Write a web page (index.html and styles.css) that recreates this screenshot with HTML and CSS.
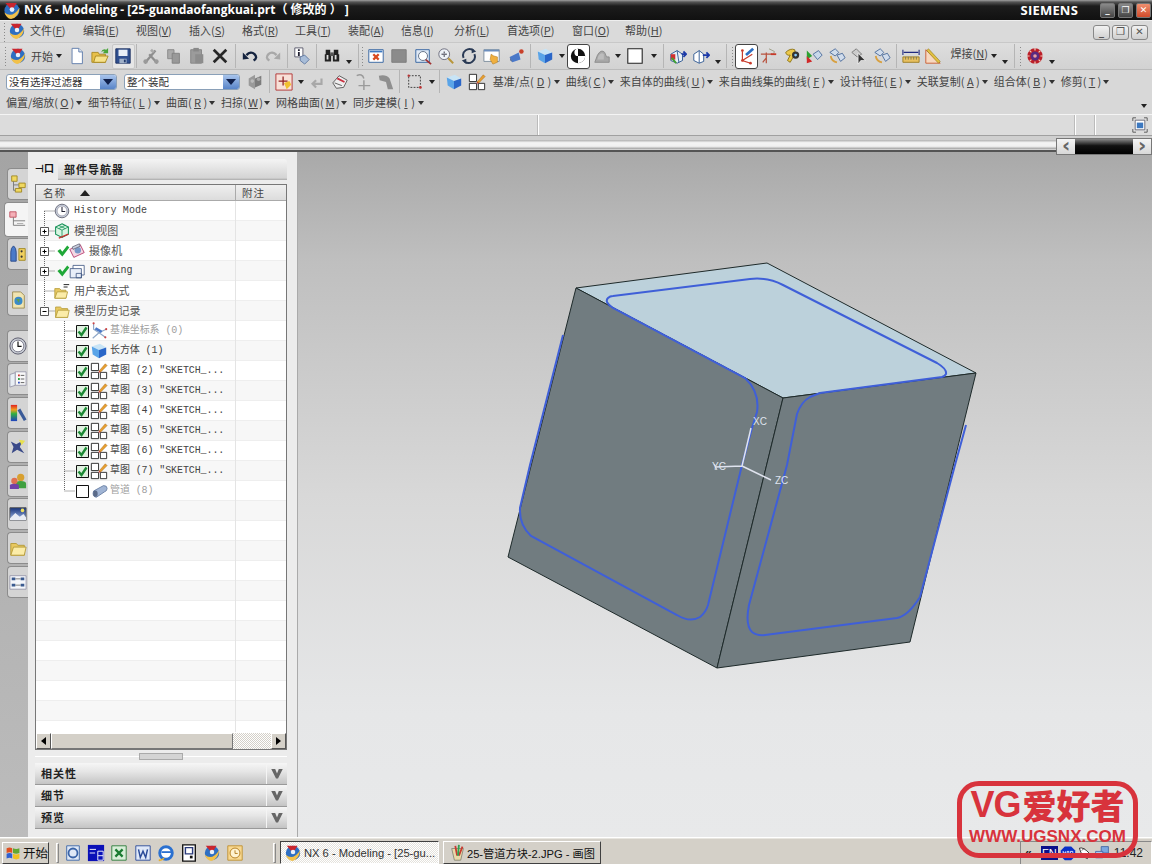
FILE: index.html
```html
<!DOCTYPE html>
<html lang="zh">
<head>
<meta charset="utf-8">
<title>NX 6 - Modeling</title>
<link rel="stylesheet" href="styles.css">
</head>
<body>
<svg class="defs" aria-hidden="true">
  <symbol id="nx" viewBox="0 0 20 20"><circle cx="10" cy="10" r="8" fill="#2e6fc2"/><path d="M3 2 10 10 15 2z" fill="#c9252e"/><path d="M2 12Q10 19 18 7 17 17 9 19 4 18 2 12z" fill="#f2c14a"/><circle cx="10" cy="9" r="2.5" fill="#e8f0fa"/></symbol>
  <symbol id="new" viewBox="0 0 20 20"><path d="M4.500 1.500H12L16 5.500V18.500H4.500z" fill="#fff" stroke="#5a78a8"/><path d="M12 1.500V5.500H16" fill="#dde6f2" stroke="#5a78a8"/></symbol>
  <symbol id="open" viewBox="0 0 20 20"><path d="M1 6H8L9 8H16V17H1z" fill="#e8c04a" stroke="#a88820"/><path d="M3 17 5 10H19L16 17z" fill="#f7e28a" stroke="#a88820"/><path d="M11 6Q13 1 17 3L19 1V7H13L15 5Q13 4 11 6z" fill="#4aa53a"/></symbol>
  <symbol id="save" viewBox="0 0 20 20"><path d="M2 2H18V18H2z" fill="#2f4f8f" stroke="#1c2f60"/><path d="M5 3H15V10H5z" fill="#e8eef6"/><path d="M6 13H14V18H6z" fill="#9fb0c8"/><path d="M11 14H13V17H11z" fill="#20386a"/></symbol>
  <symbol id="cut" viewBox="0 0 20 20"><path d="M3 18 15 4M17 18 8 8" stroke="#8e8e8e" stroke-width="2.500" fill="none"/><circle cx="4" cy="16" r="2.500" fill="#9a9a9a"/><circle cx="16" cy="16" r="2.500" fill="#9a9a9a"/><path d="M10 3 13 6" stroke="#aaa" stroke-width="3"/></symbol>
  <symbol id="copy" viewBox="0 0 20 20"><path d="M3 3H10V13H3z" fill="#aaa" stroke="#888"/><path d="M8 7H16V18H8z" fill="#999" stroke="#808080"/></symbol>
  <symbol id="paste" viewBox="0 0 20 20"><path d="M3 3H15V18H3z" fill="#9b9b9b" stroke="#858585"/><path d="M6 1H12V5H6z" fill="#888"/><path d="M8 8H17V18H8z" fill="#8c8c8c"/></symbol>
  <symbol id="del" viewBox="0 0 20 20"><path d="M3 3 17 17M17 3 3 17" stroke="#262626" stroke-width="3" fill="none"/></symbol>
  <symbol id="undo" viewBox="0 0 20 20"><path d="M6 9Q11 4 15 8T14 15" stroke="#14233f" stroke-width="2.600" fill="none"/><path d="M2 6 9 13 2 14z" fill="#14233f"/></symbol>
  <symbol id="redo" viewBox="0 0 20 20"><path d="M14 9Q9 4 5 8T6 15" stroke="#a8a8a8" stroke-width="2.600" fill="none"/><path d="M18 6 11 13 18 14z" fill="#a8a8a8"/></symbol>
  <symbol id="info" viewBox="0 0 20 20"><path d="M2 1H11V11H2z" fill="#fff" stroke="#556"/><path d="M5.500 2.500H7.500V4.500H5.500zM5.500 5.500H7.500V10H5.500z" fill="#223"/><path d="M8 11 13 9 18 14 13 19 8 15z" fill="#a8bdd8" stroke="#6078a0"/></symbol>
  <symbol id="bino" viewBox="0 0 20 20"><path d="M3 3H8V8H9V16H2V8H3zM12 3H17V8H18V16H11V8H12z" fill="#222"/><path d="M8 6H12V10H8z" fill="#555"/><path d="M4 9H6V14H4zM13 9H15V14H13z" fill="#ddd"/></symbol>
  <symbol id="fit" viewBox="0 0 20 20"><path d="M2 3H18V17H2z" fill="#fff" stroke="#2e5f9e"/><path d="M3 4H17V6H3z" fill="#3c78c0"/><path d="M7 8 13 14M13 8 7 14" stroke="#d84a20" stroke-width="2.500"/></symbol>
  <symbol id="gsq" viewBox="0 0 20 20"><path d="M2 3H18V17H2z" fill="#8b8b8b" stroke="#7a7a7a"/></symbol>
  <symbol id="zbox" viewBox="0 0 20 20"><path d="M2 3H17V17H2z" fill="#dfe8f4" stroke="#2e5f9e"/><circle cx="10" cy="10" r="5" fill="#fff" stroke="#5a6a80"/><path d="M13 14 19 19" stroke="#a03030" stroke-width="2"/></symbol>
  <symbol id="zoom" viewBox="0 0 20 20"><circle cx="8" cy="8" r="6" fill="#eef3f8" stroke="#667"/><path d="M5 8H11M8 5V7M8 9V11" stroke="#223"/><path d="M12.500 12.500 18 18" stroke="#b8963a" stroke-width="2.200"/></symbol>
  <symbol id="rot" viewBox="0 0 20 20"><path d="M4 12A7 7 0 0 1 15 4M16 8A7 7 0 0 1 5 16" stroke="#2a3a55" stroke-width="2.200" fill="none"/><path d="M13 1 18 5 13 7zM7 19 2 15 7 13z" fill="#2a3a55"/></symbol>
  <symbol id="pan" viewBox="0 0 20 20"><path d="M1 3H18V16H1z" fill="#fff" stroke="#789"/><path d="M1 3H18V5H1z" fill="#6d8fbe"/><path d="M9 8 12 10 16 11 16 17 11 19 8 14z" fill="#f0b040" stroke="#b07818" stroke-width=".6"/></symbol>
  <symbol id="spin" viewBox="0 0 20 20"><path d="M3 11 13 6 15 14 6 17z" fill="#4a78c8"/><path d="M3 11 6 17 4 15z" fill="#20407a"/><circle cx="16" cy="5" r="2.500" fill="#c8402a"/></symbol>
  <symbol id="cube" viewBox="0 0 20 20"><path d="M2 5 11 2 18 6 10 9z" fill="#c8e4f6"/><path d="M2 5 10 9V18L3 14z" fill="#5aa4e8"/><path d="M10 9 18 6V14L10 18z" fill="#2a66c8"/></symbol>
  <symbol id="ball" viewBox="0 0 20 20"><circle cx="10" cy="10" r="8" fill="#111"/><path d="M10 10H18A8 8 0 0 1 10 18zM10 2A4 4 0 0 0 6 6 4 4 0 0 0 10 10z" fill="#fff"/></symbol>
  <symbol id="gshade" viewBox="0 0 20 20"><path d="M2 17 5 9Q9 2 13 6L15 11H18V17z" fill="#a8a8a8" stroke="#8a8a8a"/><path d="M6 10Q9 5 12 8L12 14H5z" fill="#bdbdbd"/></symbol>
  <symbol id="wbox" viewBox="0 0 20 20"><path d="M2 2H18V18H2z" fill="#fff" stroke="#222" stroke-width="1.200"/></symbol>
  <symbol id="wcs1" viewBox="0 0 20 20"><path d="M2 8 9 4 15 8V15L9 18 2 15z" fill="#e8f0f8" stroke="#2a5590"/><path d="M9 4 11 17" stroke="#2a5590"/><path d="M2 8H7V14H2z" fill="#d03030"/><path d="M3 12 8 18" stroke="#40a030" stroke-width="2"/><path d="M14 8H19M16 5 19 8 16 11" stroke="#1c3aa8" stroke-width="2" fill="none"/></symbol>
  <symbol id="wcs2" viewBox="0 0 20 20"><path d="M2 8 8 4 13 8V16L8 18 2 15z" fill="#fff" stroke="#2a5590"/><path d="M8 4V18" stroke="#2a5590"/><path d="M12 9H19M16 6 19 9 16 12" stroke="#1c3aa8" stroke-width="2" fill="none"/></symbol>
  <symbol id="csys" viewBox="0 0 20 20"><path d="M6 5V15L15 18M6 15 17 8" stroke="#c83a2a" stroke-width="1.300" fill="none"/><circle cx="6" cy="4" r="1.500" fill="#c83a2a"/><circle cx="6" cy="15" r="1.500" fill="#c83a2a"/><circle cx="15" cy="18" r="1.500" fill="#c83a2a"/><path d="M10 9 18 2" stroke="#2e6fc2" stroke-width="3"/></symbol>
  <symbol id="csys2" viewBox="0 0 20 20"><path d="M7 6V18M1 8H14M7 12 3 17" stroke="#b8533f" stroke-width="1.400" fill="none"/><path d="M10 2 16 5 15 8" stroke="#9a9a80" fill="none"/><path d="M12 8H18" stroke="#c83a2a" stroke-width="2"/></symbol>
  <symbol id="ykey" viewBox="0 0 20 20"><path d="M3 6Q8 1 13 3 15 7 12 10L8 17 5 15 8 9Q4 10 3 6z" fill="#ecc84a" stroke="#8a7010"/><circle cx="14" cy="9" r="4" fill="#333"/><circle cx="14" cy="9" r="1.500" fill="#8cf"/></symbol>
  <symbol id="sel" viewBox="0 0 20 20"><path d="M2 4V14L8 10z" fill="#2aa030"/><path d="M2 10 8 16 2 18z" fill="#d02828"/><path d="M9 8 15 4 19 9 14 14z" fill="#c8d8ea" stroke="#4a6a9a"/></symbol>
  <symbol id="mblob" viewBox="0 0 20 20"><path d="M2 6 8 2 12 6 8 10z" fill="#d0dcec" stroke="#4a6a9a"/><path d="M10 9 16 7 19 12 14 16z" fill="#d0dcec" stroke="#4a6a9a"/><path d="M3 10Q4 16 10 17" stroke="#d8a040" stroke-width="2" fill="none"/></symbol>
  <symbol id="arrowsel" viewBox="0 0 20 20"><path d="M2 6 7 2 13 8 8 11z" fill="#ccc" stroke="#777"/><path d="M9 7V19L12 15H17z" fill="#333" stroke="#fff" stroke-width=".7"/></symbol>
  <symbol id="ruler" viewBox="0 0 20 20"><path d="M1 11H19V17H1z" fill="#e8c060" stroke="#9a7a20"/><path d="M1 3V9M19 3V9M2 6H18" stroke="#202a80" stroke-width="1.200"/><path d="M4 11V14M7 11V14M10 11V14M13 11V14M16 11V14" stroke="#775"/></symbol>
  <symbol id="tri" viewBox="0 0 20 20"><path d="M2 3V18H18z" fill="#f7d8c0" stroke="#c85a30"/><path d="M5 2 18 16 16 18 3 4z" fill="#e0c040" stroke="#8a7010" stroke-width=".6"/></symbol>
  <symbol id="gear" viewBox="0 0 20 20"><circle cx="10" cy="10" r="8.500" fill="#bb1f28"/><circle cx="10" cy="10" r="5" fill="#5a2a80"/><circle cx="10" cy="10" r="2" fill="#e8a0a0"/><path d="M10 1V4M10 16V19M1 10H4M16 10H19M4 4 6 6M14 14 16 16M16 4 14 6M4 16 6 14" stroke="#f0d0c0" stroke-width="1.300"/></symbol>
  <symbol id="wheels" viewBox="0 0 20 20"><path d="M3 6 10 2V18L3 14z" fill="#9a9a9a"/><path d="M10 6 17 3V13L10 16z" fill="#7c7c7c"/><circle cx="7" cy="9" r="2" fill="#bbb"/><circle cx="14" cy="7" r="2" fill="#aaa"/></symbol>
  <symbol id="tgt" viewBox="0 0 20 20"><path d="M1 1H19V19H1z" fill="#f8e0d8" stroke="#b03030"/><path d="M9 4V14M4 9H14" stroke="#902020" stroke-width="1.400"/><path d="M10 11 16 9 18 13 13 18z" fill="#f0c030"/></symbol>
  <symbol id="back" viewBox="0 0 20 20"><path d="M15 6V12H6M9 8 5 12 9 16" stroke="#a8a8a8" stroke-width="2.400" fill="none"/></symbol>
  <symbol id="hat" viewBox="0 0 20 20"><path d="M2 11 9 3 18 8 14 16 6 17z" fill="#eee" stroke="#555"/><path d="M7 6 15 10" stroke="#c83040" stroke-width="2"/><path d="M4 11 12 14" stroke="#555"/></symbol>
  <symbol id="cross1" viewBox="0 0 20 20"><path d="M11 8V19M5 14H18M3 3Q9 0 11 6" stroke="#9a9a9a" stroke-width="1.600" fill="none"/></symbol>
  <symbol id="step" viewBox="0 0 20 20"><path d="M2 3Q10 1 14 6L18 18H12L10 10 3 8z" fill="#8f8f8f"/></symbol>
  <symbol id="dash" viewBox="0 0 20 20"><path d="M3 3H16V16H3z" fill="none" stroke="#333" stroke-dasharray="2 1.500"/><circle cx="3" cy="3" r="1.300" fill="#b33"/><circle cx="16" cy="16" r="1.500" fill="#b33"/></symbol>
  <symbol id="sk" viewBox="0 0 20 20"><path d="M1.500 1.500H9.500V9.500H1.500zM1.500 11.500H9.500V18.500H1.500zM11.500 11.500H18.500V18.500H11.500z" fill="#fff" stroke="#222"/><path d="M10 10 17 2 19 4 12 11z" fill="#e8a030" stroke="#a06010" stroke-width=".5"/><path d="M10 10 12 11 9.500 12z" fill="#c82020"/></symbol>
  <symbol id="clock" viewBox="0 0 20 20"><circle cx="10" cy="10" r="8.500" fill="#c8d0dc" stroke="#556"/><circle cx="10" cy="10" r="6.200" fill="#fff" stroke="#99a"/><path d="M10 5V10.500H14" stroke="#223" stroke-width="1.300" fill="none"/></symbol>
  <symbol id="mview" viewBox="0 0 20 20"><path d="M10 1 18 5V14L10 18 2 14V5z" fill="#d8f5e2" stroke="#179058" stroke-width="1.300"/><path d="M2 5 10 9 18 5M10 9V18M6 3 14 7M14 3 6 7" stroke="#179058" fill="none"/><path d="M6 19 18 14" stroke="#cc3030" stroke-width="1.600"/></symbol>
  <symbol id="ok" viewBox="0 0 20 20"><path d="M2 10 6 7 9 11 16 2 19 5 9 18z" fill="#20a838"/></symbol>
  <symbol id="cam" viewBox="0 0 20 20"><path d="M1 8 14 2 19 12 6 18z" fill="#f4d8e4" stroke="#b02860"/><circle cx="11" cy="9" r="4" fill="#7898c8"/><path d="M4 5 13 1 14 4 5 8z" fill="#c8d0e0" stroke="#667"/></symbol>
  <symbol id="draw" viewBox="0 0 20 20"><path d="M5 3H19V15H5z" fill="#fff" stroke="#3c5480"/><path d="M1.500 7H15.500V18.500H1.500z" fill="#e8eef8" stroke="#3c5480"/><path d="M9 13H15.500V18.500H9z" fill="none" stroke="#3c5480"/></symbol>
  <symbol id="fold" viewBox="0 0 20 20"><path d="M2 5H8L10 7H17V18H2z" fill="#e8c860" stroke="#b49a38"/><path d="M2 18 5 9H19L17 18z" fill="#fbeca8" stroke="#b49a38"/></symbol>
  <symbol id="foldx" viewBox="0 0 20 20"><path d="M1 7H7L9 9H15V19H1z" fill="#e8c860" stroke="#b49a38"/><path d="M1 19 4 11H17L15 19z" fill="#fbeca8" stroke="#b49a38"/><path d="M12 2H19M12 5H17" stroke="#222" stroke-width="1.200"/></symbol>
  <symbol id="dcs" viewBox="0 0 20 20"><path d="M4 1V8L10 12 3 18M10 12 18 8M10 12 17 17" stroke="#8fa8c8" stroke-width="1.300" fill="none"/><path d="M6 7 13 11" stroke="#4a78c8" stroke-width="3"/><circle cx="4" cy="1.500" r="1.200" fill="#c44"/><circle cx="18" cy="8" r="1.200" fill="#c44"/><circle cx="17" cy="17" r="1.200" fill="#c44"/></symbol>
  <symbol id="pipe" viewBox="0 0 20 20"><path d="M4 10 15 4Q19 4 19 7 19 10 16 11L7 17Q2 16 4 10z" fill="#a0b4d4" stroke="#6a80a4"/><ellipse cx="6" cy="13" rx="2.500" ry="3.500" fill="#5a6a88"/></symbol>
  <symbol id="tab1" viewBox="0 0 20 20"><path d="M3 1H9V7H3zM11 9H18V14H11zM7 15H14V19H7z" fill="#f0d860" stroke="#a08820"/><path d="M5 7V17H7M5 11H11" stroke="#777" fill="none"/></symbol>
  <symbol id="tab2" viewBox="0 0 20 20"><path d="M2 2H9V8H2z" fill="#f4b0b8" stroke="#c05060"/><path d="M6 8V17H19M6 12H19" stroke="#777" fill="none"/><path d="M10 15H17" stroke="#aaa"/></symbol>
  <symbol id="tab3" viewBox="0 0 20 20"><path d="M2 18V8Q2 3 5 1 8 3 8 8V18z" fill="#4a7ac8" stroke="#2a4a88"/><path d="M11 4H18V17H11z" fill="#f0d060" stroke="#a08820"/><circle cx="14" cy="7" r="1.200" fill="#333"/><circle cx="14" cy="13" r="1.200" fill="#333"/></symbol>
  <symbol id="tab4" viewBox="0 0 20 20"><path d="M4 1H13L17 5V19H4z" fill="#f0e4b0" stroke="#9a8a50"/><circle cx="10.500" cy="11" r="4.500" fill="#3a8ac8"/><path d="M8 9H12L11 13z" fill="#5aa050"/></symbol>
  <symbol id="tab5" viewBox="0 0 20 20"><circle cx="10" cy="10" r="9" fill="#c8ccd4" stroke="#556"/><circle cx="10" cy="10" r="6.500" fill="#fff" stroke="#778"/><path d="M10 5V10.500H14" stroke="#111" stroke-width="1.300" fill="none"/></symbol>
  <symbol id="tab6" viewBox="0 0 20 20"><path d="M1 5 7 3V17L1 19z" fill="#e8eef4" stroke="#99a"/><path d="M7 2H19V17H7z" fill="#f8f8f8" stroke="#99a"/><path d="M10 5H12V7H10z" fill="#d03030"/><path d="M10 9H12V11H10z" fill="#30a040"/><path d="M10 13H12V15H10z" fill="#3050c0"/><path d="M13 6H17M13 10H17M13 14H17" stroke="#555"/></symbol>
  <linearGradient id="rb" x1="0" x2="0" y1="0" y2="1"><stop offset="0" stop-color="#e02020"/><stop offset=".3" stop-color="#f0a020"/><stop offset=".55" stop-color="#30b040"/><stop offset="1" stop-color="#2040c0"/></linearGradient>
  <symbol id="tab7" viewBox="0 0 20 20"><path d="M2 1H9V19H2z" fill="url(#rb)"/><path d="M11 6 18 18" stroke="#3a5a98" stroke-width="3.500"/></symbol>
  <symbol id="tab8" viewBox="0 0 20 20"><path d="M2 4 8 7 15 3 12 10 17 17 9 13 3 17 5 10z" fill="#3a4a88"/><path d="M11 2 18 3 14 8z" fill="#e8e050"/></symbol>
  <symbol id="tab9" viewBox="0 0 20 20"><circle cx="13" cy="6" r="4" fill="#d8a030"/><path d="M7 18V13Q7 10 13 10 19 10 19 13V18z" fill="#40a040"/><circle cx="6" cy="10" r="3.500" fill="#e07050"/><path d="M1 19V15Q1 13 6 13 11 13 11 15V19z" fill="#7040a8"/></symbol>
  <linearGradient id="sky" x1="0" x2="0" y1="0" y2="1"><stop offset="0" stop-color="#14307a"/><stop offset="1" stop-color="#a8c0e8"/></linearGradient>
  <symbol id="tab10" viewBox="0 0 20 20"><path d="M1 3H19V17H1z" fill="url(#sky)" stroke="#555"/><circle cx="15" cy="6" r="2" fill="#f0e060"/><path d="M1 15 7 9 12 13 16 10 19 14V17H1z" fill="#e8ecf4"/></symbol>
  <symbol id="tab12" viewBox="0 0 20 20"><path d="M1 3H19V18H1z" fill="#f4f6fa" stroke="#99a"/><path d="M3 5H7V8H3zM13 5H17V8H13zM3 12H7V15H3zM13 12H17V15H13z" fill="#3a5a90"/><path d="M7 6.500H13M7 13.500H13" stroke="#777"/></symbol>
  <symbol id="shrink" viewBox="0 0 20 20"><path d="M1 5V1H5M15 1H19V5M1 15V19H5M15 19H19V15" stroke="#444" fill="none"/><path d="M4 4H16V16H4z" fill="#fff" stroke="#556"/><path d="M6 7H14V14H6z" fill="#3c78c0"/></symbol>
  <symbol id="l0" viewBox="0 0 20 20"><path d="M8.500 0V20M8.500 10H19" stroke="#666" stroke-dasharray="1 1"/></symbol>
  <symbol id="l0first" viewBox="0 0 20 20"><path d="M8.500 10V20M8.500 10H19" stroke="#666" stroke-dasharray="1 1"/></symbol>
  <symbol id="plus" viewBox="0 0 20 20"><path d="M8.500 0V20M8.500 10H19" stroke="#666" stroke-dasharray="1 1"/><path d="M4.500 6.500H12.500V14.500H4.500z" fill="#fff" stroke="#555"/><path d="M6.500 10.500H10.500M8.500 8.500V12.500" stroke="#000"/></symbol>
  <symbol id="minus" viewBox="0 0 20 20"><path d="M8.500 0V6M12.500 10H19" stroke="#666" stroke-dasharray="1 1"/><path d="M4.500 6.500H12.500V14.500H4.500z" fill="#fff" stroke="#555"/><path d="M6.500 10.500H10.500" stroke="#000"/></symbol>
  <symbol id="l1" viewBox="0 0 40 20"><path d="M28.500 0V20M28.500 10H39" stroke="#666" stroke-dasharray="1 1"/></symbol>
  <symbol id="l1last" viewBox="0 0 40 20"><path d="M28.500 0V10H39" stroke="#666" stroke-dasharray="1 1" fill="none"/></symbol>
  <symbol id="chk" viewBox="0 0 13 13"><path d="M.5.500H12.500V12.500H.5z" fill="#dff0df" stroke="#111"/><path d="M2.500 6.500 5.500 10 10.500 2.500" stroke="#1c8a34" stroke-width="2.400" fill="none"/></symbol>
  <symbol id="unchk" viewBox="0 0 13 13"><path d="M.5.500H12.500V12.500H.5z" fill="#fff" stroke="#111"/></symbol>
  <symbol id="ql1" viewBox="0 0 20 20"><path d="M3 2H17V18H3z" fill="#dfe8f6" stroke="#3a64a8"/><circle cx="10" cy="10" r="5" fill="none" stroke="#3a64a8" stroke-width="2"/></symbol>
  <symbol id="ql2" viewBox="0 0 20 20"><path d="M1 1H19V19H1z" fill="#0a10b8"/><path d="M3 6H10M3 10H9M12 8V18M12 8H18V18H12M12 13H18" stroke="#fff" fill="none"/></symbol>
  <symbol id="ql3" viewBox="0 0 20 20"><path d="M2 2H18V18H2z" fill="#d8eed8" stroke="#2a7a3a"/><path d="M6 6 14 14M14 6 6 14" stroke="#1a7a30" stroke-width="2.500"/></symbol>
  <symbol id="ql4" viewBox="0 0 20 20"><path d="M2 2H18V18H2z" fill="#dfe8f8" stroke="#2a4a98"/><path d="M5 6 7 15 10 8 13 15 15 6" stroke="#2a4a98" stroke-width="1.600" fill="none"/></symbol>
  <symbol id="ql5" viewBox="0 0 20 20"><circle cx="10" cy="10" r="7" fill="#fff" stroke="#2a70d0" stroke-width="3.200"/><path d="M5 9H16" stroke="#2a70d0" stroke-width="2"/><path d="M3 17Q1 20 8 16" stroke="#e8b030" stroke-width="1.500" fill="none"/></symbol>
  <symbol id="ql6" viewBox="0 0 20 20"><path d="M3 1H17V19H3z" fill="#fff" stroke="#111" stroke-width="1.500"/><path d="M6 4H14V11H6z" fill="none" stroke="#2a3a7a" stroke-width="1.600"/><path d="M11 13H14V16H11z" fill="#111"/></symbol>
  <symbol id="ql8" viewBox="0 0 20 20"><path d="M2 2H18V18H2z" fill="#f8d890" stroke="#c09030"/><circle cx="10" cy="10" r="5.500" fill="#fff3d0" stroke="#b07818"/><path d="M10 7V10.500H13" stroke="#b07818" fill="none"/></symbol>
  <symbol id="flag" viewBox="0 0 20 20"><path d="M2 4Q6 2 9 4V10Q6 8 2 10z" fill="#e05020"/><path d="M10 4Q14 6 18 4V10Q14 12 10 10z" fill="#60a830"/><path d="M2 11Q6 9 9 11V17Q6 15 2 17z" fill="#3060d0"/><path d="M10 11Q14 13 18 11V17Q14 19 10 17z" fill="#f0c020"/></symbol>
  <symbol id="paint" viewBox="0 0 20 20"><path d="M3 5 6 18H13L16 5z" fill="#e8d8a8" stroke="#887"/><path d="M7 2 9 13M15 3 11 13" stroke-width="2" stroke="#c83a30" fill="none"/><path d="M11 1 10 13" stroke="#30a050" stroke-width="2"/></symbol>
  <symbol id="trayblue" viewBox="0 0 20 20"><path d="M6 2H14L19 7V14L14 19H6L1 14V7z" fill="#0a30c8"/><path d="M4 12V8L7 12V8M9 8H11V12H9zM13 8H16V12H13z" stroke="#fff" fill="none"/></symbol>
  <symbol id="mouse" viewBox="0 0 20 20"><path d="M3 4Q8 2 16 11L13 17Q6 15 3 4z" fill="#fff" stroke="#111"/><path d="M6 7 9 4" stroke="#333"/></symbol>
  <symbol id="net" viewBox="0 0 20 20"><path d="M9 2H18V10H9z" fill="#7ca8e0" stroke="#3a60a0"/><path d="M2 8H11V16H2z" fill="#a8c8f0" stroke="#3a60a0"/></symbol>
</svg>

<div class="app">
  <header class="titlebar">
    <svg class="tb-logo"><use href="#nx"/></svg>
    <span class="tb-title">NX 6 - Modeling - [25-guandaofangkuai.prt（ 修改的 ） ]</span>
    <span class="siemens">SIEMENS</span>
    <div class="tb-btns">
      <span class="tb-btn">_</span><span class="tb-btn">❐</span><span class="tb-btn close">✕</span>
    </div>
  </header>

  <nav class="menubar">
    <span class="grip"></span>
    <svg class="mb-logo"><use href="#nx"/></svg>
    <span class="mi">文件(<u>F</u>)</span><span class="mi">编辑(<u>E</u>)</span><span class="mi">视图(<u>V</u>)</span><span class="mi">插入(<u>S</u>)</span><span class="mi">格式(<u>R</u>)</span><span class="mi">工具(<u>T</u>)</span><span class="mi">装配(<u>A</u>)</span><span class="mi">信息(<u>I</u>)</span><span class="mi">分析(<u>L</u>)</span><span class="mi mi-w">首选项(<u>P</u>)</span><span class="mi">窗口(<u>O</u>)</span><span class="mi">帮助(<u>H</u>)</span>
    <div class="mdi">
      <span class="mdi-b">_</span><span class="mdi-b">❐</span><span class="mdi-b">✕</span>
    </div>
  </nav>

  <div class="tools">
    <span class="grip g6"></span>
    <span class="c c19"><svg class="ic"><use href="#nx"/></svg></span>
    <span class="start-t">开始</span><span class="dd d12"></span>
    <span class="c"><svg class="ic"><use href="#new"/></svg></span>
    <span class="c"><svg class="ic"><use href="#open"/></svg></span>
    <span class="c hl"><svg class="ic"><use href="#save"/></svg></span>
    <span class="sep s4"></span>
    <span class="c"><svg class="ic"><use href="#cut"/></svg></span>
    <span class="c"><svg class="ic"><use href="#copy"/></svg></span>
    <span class="c"><svg class="ic"><use href="#paste"/></svg></span>
    <span class="c"><svg class="ic"><use href="#del"/></svg></span>
    <span class="sep"></span>
    <span class="c"><svg class="ic"><use href="#undo"/></svg></span>
    <span class="c"><svg class="ic"><use href="#redo"/></svg></span>
    <span class="sep"></span>
    <span class="c"><svg class="ic"><use href="#info"/></svg></span>
    <span class="sep"></span>
    <span class="c"><svg class="ic"><use href="#bino"/></svg></span>
    <span class="dd d12 low"></span>
    <span class="sep"></span>
    <span class="grip g3"></span>
    <span class="c"><svg class="ic"><use href="#fit"/></svg></span>
    <span class="c"><svg class="ic"><use href="#gsq"/></svg></span>
    <span class="c"><svg class="ic"><use href="#zbox"/></svg></span>
    <span class="c"><svg class="ic"><use href="#zoom"/></svg></span>
    <span class="c"><svg class="ic"><use href="#rot"/></svg></span>
    <span class="c"><svg class="ic"><use href="#pan"/></svg></span>
    <span class="c"><svg class="ic"><use href="#spin"/></svg></span>
    <span class="sep"></span>
    <span class="c"><svg class="ic"><use href="#cube"/></svg></span>
    <span class="dd d10"></span>
    <span class="c act"><svg class="ic"><use href="#ball"/></svg></span>
    <span class="c"><svg class="ic"><use href="#gshade"/></svg></span>
    <span class="dd d10"></span>
    <span class="c"><svg class="ic"><use href="#wbox"/></svg></span>
    <span class="dd d14"></span>
    <span class="sep"></span>
    <span class="c"><svg class="ic"><use href="#wcs1"/></svg></span>
    <span class="c"><svg class="ic"><use href="#wcs2"/></svg></span>
    <span class="dd d10 low"></span>
    <span class="sep"></span>
    <span class="grip g6"></span>
    <span class="c n act"><svg class="ic"><use href="#csys"/></svg></span>
    <span class="c n"><svg class="ic"><use href="#csys2"/></svg></span>
    <span class="c n"><svg class="ic"><use href="#ykey"/></svg></span>
    <span class="c n"><svg class="ic"><use href="#sel"/></svg></span>
    <span class="c n"><svg class="ic"><use href="#mblob"/></svg></span>
    <span class="c n"><svg class="ic"><use href="#arrowsel"/></svg></span>
    <span class="c n"><svg class="ic"><use href="#mblob"/></svg></span>
    <span class="sep"></span>
    <span class="c n"><svg class="ic"><use href="#ruler"/></svg></span>
    <span class="c n"><svg class="ic"><use href="#tri"/></svg></span>
    <span class="weld">焊接(<u>N</u>)</span><span class="dd d10"></span>
    <span class="dd d12 low"></span>
    <span class="sep"></span>
    <span class="grip g6"></span>
    <span class="c"><svg class="ic"><use href="#gear"/></svg></span>
    <span class="dd d10 low"></span>
  </div>

  <div class="tools2">
    <div class="combo c110"><span class="combo-t">没有选择过滤器</span><span class="combo-b"></span></div>
    <div class="combo c115"><span class="combo-t">整个装配</span><span class="combo-b"></span></div>
    <span class="c tight"><svg class="ic"><use href="#wheels"/></svg></span>
    <span class="sep"></span>
    <span class="c c-s"><svg class="ic"><use href="#tgt"/></svg></span>
    <span class="dd d10"></span>
    <span class="c c-s"><svg class="ic"><use href="#back"/></svg></span>
    <span class="c n"><svg class="ic"><use href="#hat"/></svg></span>
    <span class="c n"><svg class="ic"><use href="#cross1"/></svg></span>
    <span class="c n"><svg class="ic"><use href="#step"/></svg></span>
    <span class="sep"></span>
    <span class="c c-s"><svg class="ic"><use href="#dash"/></svg></span>
    <span class="dd d10"></span>
    <span class="sep"></span>
    <span class="c c-s"><svg class="ic"><use href="#cube"/></svg></span>
    <span class="c n"><svg class="ic"><use href="#sk"/></svg></span>
    <span class="m p73">基准/点(<u>D</u>)</span>
    <span class="m p54">曲线(<u>C</u>)</span>
    <span class="m p99">来自体的曲线(<u>U</u>)</span>
    <span class="m p121">来自曲线集的曲线(<u>F</u>)</span>
    <span class="m p77">设计特征(<u>E</u>)</span>
    <span class="m p77">关联复制(<u>A</u>)</span>
    <span class="m p67">组合体(<u>B</u>)</span>
    <span class="m p54">修剪(<u>T</u>)</span>
  </div>

  <div class="tools3">
    <span class="m p82">偏置/缩放(<u>O</u>)</span>
    <span class="m p78">细节特征(<u>L</u>)</span>
    <span class="m p55">曲面(<u>R</u>)</span>
    <span class="m p55">扫掠(<u>W</u>)</span>
    <span class="m p77">网格曲面(<u>M</u>)</span>
    <span class="m p77">同步建模(<u>I</u>)</span>
    <span class="dd d12 more"></span>
  </div>

  <div class="status">
    <span class="st st1"></span><span class="st st2"></span><span class="st st3"></span>
    <svg class="st-ic"><use href="#shrink"/></svg>
  </div>

  <div class="slider">
    <div class="sl-track"></div>
    <div class="sl-ctl">
      <span class="sl-b">‹</span><span class="sl-thumb"></span><span class="sl-b">›</span>
    </div>
  </div>

  <main class="main">
    <aside class="rail">
      <span class="tab"><svg class="ti"><use href="#tab1"/></svg></span>
      <span class="tab on"><svg class="ti"><use href="#tab2"/></svg></span>
      <span class="tab"><svg class="ti"><use href="#tab3"/></svg></span>
      <span class="tab gap"><svg class="ti"><use href="#tab4"/></svg></span>
      <span class="tab gap"><svg class="ti"><use href="#tab5"/></svg></span>
      <span class="tab"><svg class="ti"><use href="#tab6"/></svg></span>
      <span class="tab"><svg class="ti"><use href="#tab7"/></svg></span>
      <span class="tab"><svg class="ti"><use href="#tab8"/></svg></span>
      <span class="tab"><svg class="ti"><use href="#tab9"/></svg></span>
      <span class="tab"><svg class="ti"><use href="#tab10"/></svg></span>
      <span class="tab"><svg class="ti"><use href="#fold"/></svg></span>
      <span class="tab"><svg class="ti"><use href="#tab12"/></svg></span>
    </aside>

    <section class="panel">
      <div class="p-head">
        <span class="pin">⊣口</span>
        <span class="p-title">部件导航器</span>
      </div>
      <div class="tree">
        <div class="t-head"><span class="th1">名称<span class="sort"></span></span><span class="th2">附注</span></div>
        <div class="rows">
          <div class="r"><svg class="e"><use href="#l0first"/></svg><svg class="k"><use href="#clock"/></svg><span class="lb mono">History Mode</span></div>
          <div class="r"><svg class="e"><use href="#plus"/></svg><svg class="k"><use href="#mview"/></svg><span class="lb">模型视图</span></div>
          <div class="r"><svg class="e"><use href="#plus"/></svg><svg class="ok"><use href="#ok"/></svg><svg class="k"><use href="#cam"/></svg><span class="lb lb2">摄像机</span></div>
          <div class="r"><svg class="e"><use href="#plus"/></svg><svg class="ok"><use href="#ok"/></svg><svg class="k"><use href="#draw"/></svg><span class="lb lb2 mono">Drawing</span></div>
          <div class="r"><svg class="e"><use href="#l0"/></svg><svg class="k"><use href="#foldx"/></svg><span class="lb">用户表达式</span></div>
          <div class="r"><svg class="e"><use href="#minus"/></svg><svg class="k"><use href="#fold"/></svg><span class="lb">模型历史记录</span></div>
          <div class="r"><svg class="e1"><use href="#l1"/></svg><svg class="cb"><use href="#chk"/></svg><svg class="k k1"><use href="#dcs"/></svg><span class="lb lb3 dim">基准坐标系 (0)</span></div>
          <div class="r"><svg class="e1"><use href="#l1"/></svg><svg class="cb"><use href="#chk"/></svg><svg class="k k1"><use href="#cube"/></svg><span class="lb lb3">长方体 (1)</span></div>
          <div class="r"><svg class="e1"><use href="#l1"/></svg><svg class="cb"><use href="#chk"/></svg><svg class="k k1"><use href="#sk"/></svg><span class="lb lb3">草图 (2) "SKETCH_...</span></div>
          <div class="r"><svg class="e1"><use href="#l1"/></svg><svg class="cb"><use href="#chk"/></svg><svg class="k k1"><use href="#sk"/></svg><span class="lb lb3">草图 (3) "SKETCH_...</span></div>
          <div class="r"><svg class="e1"><use href="#l1"/></svg><svg class="cb"><use href="#chk"/></svg><svg class="k k1"><use href="#sk"/></svg><span class="lb lb3">草图 (4) "SKETCH_...</span></div>
          <div class="r"><svg class="e1"><use href="#l1"/></svg><svg class="cb"><use href="#chk"/></svg><svg class="k k1"><use href="#sk"/></svg><span class="lb lb3">草图 (5) "SKETCH_...</span></div>
          <div class="r"><svg class="e1"><use href="#l1"/></svg><svg class="cb"><use href="#chk"/></svg><svg class="k k1"><use href="#sk"/></svg><span class="lb lb3">草图 (6) "SKETCH_...</span></div>
          <div class="r"><svg class="e1"><use href="#l1"/></svg><svg class="cb"><use href="#chk"/></svg><svg class="k k1"><use href="#sk"/></svg><span class="lb lb3">草图 (7) "SKETCH_...</span></div>
          <div class="r"><svg class="e1"><use href="#l1last"/></svg><svg class="cb"><use href="#unchk"/></svg><svg class="k k1"><use href="#pipe"/></svg><span class="lb lb3 dim">管道 (8)</span></div>
        </div>
        <div class="hscroll">
          <span class="hb hb-l"></span><span class="h-thumb"></span><span class="h-rest"></span><span class="hb hb-r"></span>
        </div>
      </div>
      <div class="split"><span class="split-h"></span></div>
      <div class="acc"><span class="acc-t">相关性</span><span class="acc-c"></span></div>
      <div class="acc"><span class="acc-t">细节</span><span class="acc-c"></span></div>
      <div class="acc"><span class="acc-t">预览</span><span class="acc-c"></span></div>
    </section>

    <section class="canvas">
      <svg class="model" viewBox="298 152 854 685">
        <path d="M576 288 767 263 976 373 783 398z" fill="#bcd1db" stroke="#1e2a2a"/>
        <path d="M576 288 783 398 717 668 508 557z" fill="#717c80" stroke="#1e2a2a"/>
        <path d="M783 398 976 373 910 642 717 668z" fill="#717c80" stroke="#1e2a2a"/>
        <path class="cv" d="M563 335 530 465 520 508Q519 525 531 536L677 615Q690 623 700 617 706 612 708 605L742 465 752 428 757 412Q760 392 745 378L613 308Q604 302 608 298 610 296 613 296L750 279Q768 277 783 285L937 363Q947 369 946 374 945 376 942 377L820 393 810 397Q801 402 797 414L787 465 749 605Q745 625 752 632 757 636 765 635L897 618Q908 616 920 597L955 465 966 425"/>
        <path class="axis" d="M751 428 742 466M742 466 715 467M742 466 771 480"/>
        <path class="axis2" d="M714 464 717 470"/>
        <text x="753" y="425" class="ax">XC</text>
        <text x="712" y="470" class="ax">YC</text>
        <text x="775" y="484" class="ax">ZC</text>
      </svg>
    </section>
  </main>

  <footer class="taskbar">
    <button class="startbtn"><svg class="fl"><use href="#flag"/></svg>开始</button>
    <span class="tsep ts1"></span>
    <svg class="ql"><use href="#ql1"/></svg>
    <svg class="ql"><use href="#ql2"/></svg>
    <svg class="ql"><use href="#ql3"/></svg>
    <svg class="ql"><use href="#ql4"/></svg>
    <svg class="ql"><use href="#ql5"/></svg>
    <svg class="ql"><use href="#ql6"/></svg>
    <svg class="ql"><use href="#nx"/></svg>
    <svg class="ql"><use href="#ql8"/></svg>
    <span class="tsep ts2"></span>
    <div class="task on"><svg class="task-i"><use href="#nx"/></svg>NX 6 - Modeling - [25-gu...</div>
    <div class="task t2"><svg class="task-i"><use href="#paint"/></svg>25-管道方块-2.JPG - 画图</div>
    <div class="tray">
      <span class="tr-more">«</span><span class="tr-fn">FN</span>
      <svg class="tr-i"><use href="#trayblue"/></svg><svg class="tr-i"><use href="#mouse"/></svg><svg class="tr-i"><use href="#net"/></svg>
      <span class="clock">11:42</span>
    </div>
  </footer>
</div>

<div class="stamp">
  <div class="stamp-a"><span class="vg">VG</span><span>爱好者</span></div>
  <div class="stamp-b">WWW.UGSNX.COM</div>
</div>
</body>
</html>
```
FILE: styles.css
```css
* { box-sizing: border-box; }
html, body { margin: 0; padding: 0; }
body {
  width: 1152px; height: 864px; overflow: hidden; position: relative;
  font-family: "Noto Sans CJK SC", "Liberation Sans", sans-serif;
  font-size: 11px; color: #444; background: #d8d8d8;
}
u { text-decoration: underline; }
.defs { position: absolute; width: 0; height: 0; }
.app { display: flex; flex-direction: column; height: 864px; }

.titlebar {
  height: 20px; display: flex; align-items: center; flex: none;
  background: linear-gradient(#a0a0a0 0, #555 2px, #1c1c1c 6px, #111 100%);
  color: #fff;
}
.tb-logo { width: 20px; height: 19px; margin-left: 2px; flex: none; }
.tb-title { margin-left: 2px; font: bold 12px/20px "Open Sans", "Noto Sans CJK SC", sans-serif; white-space: nowrap; }
.siemens { margin-left: auto; font: bold 13px/20px "Open Sans", sans-serif; letter-spacing: .2px; }
.tb-btns { display: flex; gap: 3px; margin: 0 1px 0 22px; }
.tb-btn {
  width: 15px; height: 15px; border-radius: 2px; background: linear-gradient(#8a8a8a, #444);
  border: 1px solid #777; color: #fff; font: bold 9px/13px "DejaVu Sans", sans-serif; text-align: center;
}
.tb-btn.close { background: linear-gradient(#f09070, #d04a2a); }

.menubar {
  height: 22px; flex: none; display: flex; align-items: center; background: #dadada;
  border-top: 1px solid #eee;
}
.grip { flex: none; align-self: center; height: 20px; background: radial-gradient(circle, #8a8a8a 0.8px, transparent 1px) center top/3px 3px repeat-y; }
.menubar .grip { width: 5px; margin-left: 2px; }
.mb-logo { width: 18px; height: 18px; margin: -2px 4px 0 1px; flex: none; }
.mi { width: 53px; flex: none; white-space: nowrap; line-height: 18px; padding-bottom: 3px; }
.mi-w { width: 65px; }
.mdi { margin-left: auto; display: flex; gap: 2px; margin: 2px 4px 0 auto; }
.mdi-b {
  width: 17px; height: 15px; border: 1px solid #888; border-radius: 3px; background: linear-gradient(#f2f2f2, #cfcfcf);
  color: #555; font: bold 10px/12px "DejaVu Sans", sans-serif; text-align: center;
}

.tools {
  height: 28px; flex: none; display: flex; align-items: center; padding-left: 2px;
  background: linear-gradient(#dedede, #d2d2d2); border-top: 1px solid #c8c8c8; border-bottom: 1px solid #bbb;
}
.g6 { width: 6px; } .g3 { width: 3px; }
.c { width: 23.300px; height: 25px; flex: none; display: flex; align-items: center; justify-content: center; }
.c.n { width: 22.600px; }
.c.c19 { width: 19px; }
.ic { width: 18px; height: 18px; display: block; }
.hl { background: #e6e6e6; border: 1px solid #c8c8c8; border-radius: 2px; }
.act { background: #fff; border: 1px solid #444; border-radius: 3px; }
.start-t { width: 26px; padding-left: 4px; flex: none; }
.sep { width: 6px; height: 24px; flex: none; background: linear-gradient(#b5b5b5, #b5b5b5) center/1px 100% no-repeat; }
.s4 { width: 4px; }
.dd { flex: none; height: 10px; position: relative; display: block; }
.dd::after {
  content: ""; position: absolute; left: 50%; top: 3px; margin-left: -3px;
  border: 3px solid transparent; border-top: 4px solid #222; border-bottom: 0;
}
.d10 { width: 10px; } .d12 { width: 12px; } .d14 { width: 14px; }
.low { margin-top: 12px; }
.weld { width: 45px; padding-left: 6px; flex: none; white-space: nowrap; margin-top: -6px; }

.tools2 {
  height: 23px; flex: none; display: flex; align-items: center; padding-left: 6px; background: #d8d8d8;
}
.combo { height: 16px; flex: none; display: flex; background: #fff; border: 1px solid #8aa0b8; border-radius: 3px; overflow: hidden; }
.c110 { width: 111px; margin-right: 7px; }
.c115 { width: 116px; margin-right: 4px; }
.combo-t { flex: 1; padding-left: 2px; line-height: 14px; font-size: 10.500px; color: #333; white-space: nowrap; }
.combo-b {
  width: 16px; position: relative; background: linear-gradient(#a8c4ec, #5884c8);
}
.combo-b::after {
  content: ""; position: absolute; left: 3px; top: 4px;
  border: 5px solid transparent; border-top: 6px solid #10204a; border-bottom: 0;
}
.c.tight { width: 22px; }
.c.c-s { width: 23.600px; }
.m { display: flex; justify-content: space-between; align-items: center; flex: none; padding: 0 6px 1px 0; white-space: nowrap; line-height: 16px; }
.m::after { content: ""; border: 3px solid transparent; border-top: 4px solid #333; border-bottom: 0; margin-top: 2px; flex: none; }
.m u { margin: 0 .5px; }
.p54 { width: 54px; } .p55 { width: 55px; } .p67 { width: 67px; } .p73 { width: 73px; }
.p77 { width: 77px; } .p78 { width: 78px; } .p82 { width: 82px; } .p99 { width: 99px; } .p121 { width: 121px; }
.tools2 .p73 { margin-left: 4px; }
.tools3 { height: 22px; flex: none; display: flex; align-items: center; padding: 0 0 3px 6px; background: #d8d8d8; border-bottom: 1px solid #f4f4f4; }
.more { margin-left: auto; margin-right: 2px; margin-top: 8px; }

.status { height: 21px; flex: none; display: flex; align-items: center; background: #dcdcdc; border-bottom: 1px solid #a0a0a0; }
.st { display: block; height: 100%; width: 2px; flex: none; background: linear-gradient(#bbb, #bbb) left/1px 100% no-repeat, linear-gradient(#fff, #fff) right/1px 100% no-repeat; }
.st1 { margin-left: 537px; }
.st2 { margin-left: 535px; }
.st3 { margin-left: 18px; }
.st-ic { width: 16px; height: 16px; margin-left: auto; margin-right: 4px; }

.slider { height: 16px; flex: none; display: flex; align-items: flex-start; background: #cfcfcf; border-bottom: 2px solid #555; position: relative; z-index: 1; }
.sl-track { flex: 1; height: 9px; margin-top: 4px; background: linear-gradient(#b0b0b0, #f4f4f4 30%, #f0f0f0 70%, #a0a0a0); }
.sl-ctl { width: 96px; flex: none; display: flex; margin-top: 2px; height: 17px; border: 1px solid #777; background: #eee; }
.sl-b { width: 18px; font: bold 20px/13px "DejaVu Sans", sans-serif; color: #666; text-align: center; background: linear-gradient(#f4f4f4, #d8d8d8); flex: none; }
.sl-thumb { flex: 1; background: linear-gradient(#888, #111 45%, #000); }

.main { flex: 1; min-height: 0; display: flex; }
.rail { width: 28px; flex: none; padding: 16px 0 0 7px; display: flex; flex-direction: column; gap: 1.700px; background: linear-gradient(#a4a4a4, #bcbcbc); }
.tab {
  width: 21px; height: 32px; background: #d4d4d4; border: 1px solid #8c8c8c; border-right: 0;
  border-radius: 4px 0 0 4px; display: flex; align-items: center; justify-content: center; flex: none;
}
.tab.on { width: 24px; height: 35px; margin-left: -3px; background: #f4f4f4; }
.tab.gap { margin-top: 12px; }
.ti { width: 18px; height: 18px; }

.panel { width: 270px; flex: none; padding: 7px 10px 8px 7px; display: flex; flex-direction: column; background: #ececec; border-right: 1px solid #aaa; }
.p-head { height: 21px; flex: none; display: flex; margin-bottom: 4px; }
.pin { width: 23px; font: bold 10px/18px "Noto Sans CJK SC", sans-serif; color: #111; white-space: nowrap; overflow: hidden; }
.p-title { flex: 1; font-weight: 700; color: #222; letter-spacing: 1px; padding-left: 6px; line-height: 20px; background: linear-gradient(#f4f4f4, #d4d4d4 90%, #aaa); border-radius: 3px 3px 0 0; }
.tree { flex: 1; min-height: 0; display: flex; flex-direction: column; border: 1px solid #777; background: #fff; }
.t-head { height: 16px; flex: none; display: flex; background: linear-gradient(#efefef, #dcdcdc); border-bottom: 1px solid #aaa; line-height: 15px; font-size: 10.500px; color: #444; }
.th1 { width: 200px; padding-left: 7px; letter-spacing: 1px; border-right: 1px solid #aaa; display: flex; align-items: center; }
.sort { margin-left: 14px; border: 5px solid transparent; border-bottom: 6px solid #222; border-top: 0; }
.th2 { flex: 1; padding-left: 6px; letter-spacing: 1px; }
.rows {
  flex: 1; min-height: 0; overflow: hidden;
  background:
    linear-gradient(#e4e4e4, #e4e4e4) 199px 0/1px 100% no-repeat,
    repeating-linear-gradient(#fff 0 19px, #eee 19px 20px, #f7f7f7 20px 39px, #eee 39px 40px);
}
.r { height: 20px; display: flex; align-items: center; }
.e { width: 20px; height: 20px; flex: none; margin-right: -2px; }
.e1 { width: 40px; height: 20px; flex: none; }
.k { width: 16px; height: 16px; flex: none; }
.ok { width: 14px; height: 14px; flex: none; margin: 0 -1px 0 2px; }
.lb { white-space: nowrap; margin-left: 4px; font: 11px/18px "Noto Sans CJK SC", sans-serif; color: #555; letter-spacing: .1px; padding-bottom: 2px; }
.lb.lb2 { margin-left: 4px; }
.lb.mono { font: 10px/20px "Liberation Mono", monospace; color: #444; padding-bottom: 0; }
.lb.lb2.mono { margin-left: 5px; }
.lb.lb3 { margin-left: 2px; font: 10px/20px "Liberation Mono", "Noto Sans CJK SC", monospace; color: #444; letter-spacing: -.1px; padding-bottom: 0; }
.lb.lb3.dim { color: #a0a0a0; }
.cb { width: 13px; height: 13px; flex: none; }
.k.k1 { width: 18px; height: 18px; margin-left: 1px; }
.hscroll { height: 17px; flex: none; display: flex; background: #d4d0c8; border-top: 1px solid #fff; }
.hb { width: 15px; flex: none; background: #d4d0c8; border: 1px solid; border-color: #fff #555 #555 #fff; position: relative; }
.hb::after { content: ""; position: absolute; top: 3px; left: 4px; border: 4px solid transparent; }
.hb-l::after { border-right: 5px solid #000; border-left: 0; }
.hb-r::after { border-left: 5px solid #000; border-right: 0; }
.h-thumb { width: 182px; flex: none; background: #d4d0c8; border: 1px solid; border-color: #fff #777 #777 #fff; }
.h-rest { flex: 1; background: repeating-conic-gradient(#fff 0 25%, #d4d0c8 0 50%) 0 0/2px 2px; }
.split { height: 13px; flex: none; display: flex; align-items: center; justify-content: center; background: linear-gradient(#fff, #fff) center/100% 1px no-repeat; }
.split-h { width: 44px; height: 7px; background: #d4d4d4; border: 1px solid #aaa; }
.acc { height: 22px; flex: none; display: flex; background: linear-gradient(#f6f6f6, #e6e6e6 40%, #c4c4c4); border-bottom: 1px solid #999; }
.acc-t { flex: 1; padding-left: 6px; font-weight: 700; color: #222; line-height: 20px; letter-spacing: 1px; }
.acc-c { width: 21px; flex: none; display: flex; align-items: center; justify-content: center; border-left: 1px solid #f4f4f4; }
.acc-c::after {
  content: ""; width: 12px; height: 10px; background: #666;
  clip-path: polygon(0 0, 4px 0, 6px 5px, 8px 0, 12px 0, 7px 10px, 5px 10px);
}

.canvas { flex: 1; min-width: 0; background: linear-gradient(#a9a9a9 0, #bfbfbf 16%, #d8d8d8 50%, #e6e7e8 82%, #e8e9ea 100%); }
.model { display: block; width: 100%; height: 100%; }
.cv { fill: none; stroke: #3f5fd8; stroke-width: 2; }
.axis { fill: none; stroke: #dfe3ee; stroke-width: 1.500; }
.axis2 { fill: none; stroke: #dfe3ee; }
.ax { font: 10px "Liberation Sans", sans-serif; fill: #dfe3ee; }

.taskbar {
  height: 27px; flex: none; display: flex; align-items: center; padding: 3px 0 0 2px; background: #d4d0c8;
  border-top: 1px solid #fff; box-shadow: inset 0 1px 0 #e8e6e0;
}
.startbtn {
  width: 47px; height: 22px; flex: none; display: flex; align-items: center; gap: 2px; padding: 0 0 0 2px;
  font: 12.500px "Noto Sans CJK SC", sans-serif; color: #111; background: #d4d0c8;
  border: 1px solid; border-color: #fff #404040 #404040 #fff;
}
.fl { width: 16px; height: 16px; flex: none; }
.tsep { width: 3px; height: 20px; flex: none; border: 1px solid; border-color: #fff #888 #888 #fff; }
.ts1 { margin: 0 2px 0 7px; }
.ts2 { margin: 0 4px 0 26px; }
.ql { width: 18px; height: 18px; flex: none; margin: 0 2.600px; }
.ql:first-of-type { margin-left: 3px; }
.task {
  height: 23px; flex: none; display: flex; align-items: center; gap: 2px; white-space: nowrap;
  font: 11.200px "Liberation Sans", "Noto Sans CJK SC", sans-serif; color: #111; padding-left: 3px;
}
.task.on { width: 159px; background: repeating-conic-gradient(#fff 0 25%, #e4e2dc 0 50%) 0 0/2px 2px; border: 1px solid; border-color: #404040 #fff #fff #404040; color: #333; }
.task.t2 { width: 158px; margin-left: 4px; background: #d4d0c8; border: 1px solid; border-color: #fff #404040 #404040 #fff; padding-left: 5px; gap: 0; }
.task-i { width: 18px; height: 18px; flex: none; }
.tray {
  margin-left: auto; width: 132px; height: 24px; flex: none; display: flex; align-items: center;
  border: 1px solid; border-color: #888 #fff #fff #888; padding-left: 4px; font: 12px "Liberation Sans", sans-serif; color: #222;
}
.tr-more { width: 16px; font-weight: 700; }
.tr-fn { background: #0a108a; color: #fff; padding: 0 1px; line-height: 14px; font-size: 11px; margin-right: 1px; }
.tr-i { width: 16px; height: 16px; margin-left: 1px; flex: none; }
.clock { margin-left: auto; margin-right: 8px; }

.stamp {
  position: absolute; left: 957px; top: 781px; width: 181px; height: 77px;
  border: 5px solid #d8333c; border-radius: 22px; color: #d8333c;
  display: flex; flex-direction: column; align-items: center;
}
.stamp-a { display: flex; align-items: center; font: 900 34px/38px "Noto Sans CJK SC", sans-serif; white-space: nowrap; }
.vg { font: 900 36px/38px "Liberation Sans", sans-serif; margin-right: 2px; letter-spacing: -1px; }
.stamp-b { font: bold 17px/18px "Liberation Sans", sans-serif; white-space: nowrap; margin-top: 4px; }
```
